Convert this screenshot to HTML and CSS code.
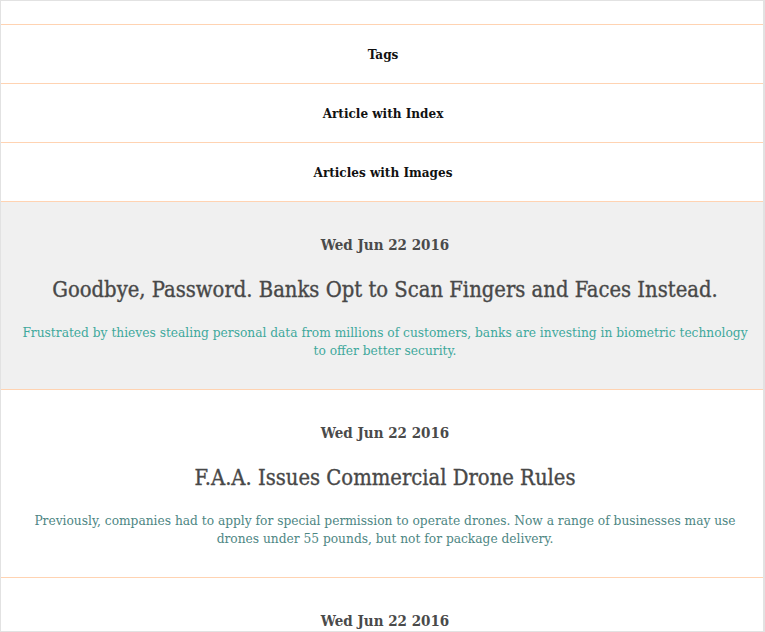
FILE: index.html
```html
<!DOCTYPE html>
<html>
<head>
<meta charset="utf-8">
<link rel="stylesheet" href="styles.css">
</head>
<body>
<div class="frame">
  <div class="top-row"></div>
  <nav class="nav">
    <a class="nav-item">Tags</a>
    <a class="nav-item">Article with Index</a>
    <a class="nav-item">Articles with Images</a>
  </nav>
  <div class="articles">
    <article class="article is-hover">
      <p class="date">Wed Jun 22 2016</p>
      <h2 class="title">Goodbye, Password. Banks Opt to Scan Fingers and Faces Instead.</h2>
      <p class="desc">Frustrated by thieves stealing personal data from millions of customers, banks are investing in biometric technology to offer better security.</p>
    </article>
    <article class="article">
      <p class="date">Wed Jun 22 2016</p>
      <h2 class="title">F.A.A. Issues Commercial Drone Rules</h2>
      <p class="desc">Previously, companies had to apply for special permission to operate drones. Now a range of businesses may use drones under 55 pounds, but not for package delivery.</p>
    </article>
    <article class="article">
      <p class="date">Wed Jun 22 2016</p>
      <h2 class="title">More Articles</h2>
    </article>
  </div>
</div>
</body>
</html>
```
FILE: styles.css
```css
html, body {
  margin: 0;
  padding: 0;
  background: #fff;
}
body {
  font-family: "DejaVu Serif Condensed", "DejaVu Serif", serif;
  font-stretch: condensed;
}
.frame {
  box-sizing: border-box;
  width: 765px;
  height: 632px;
  overflow: hidden;
  border: 1px solid #e2e2e2;
  border-right-width: 2px;
  display: flex;
  flex-direction: column;
}
.top-row {
  height: 23px;
  flex: none;
  border-bottom: 1px solid #ffd3b2;
}
.nav {
  display: flex;
  flex-direction: column;
  flex: none;
}
.nav-item {
  height: 58px;
  display: flex;
  align-items: center;
  justify-content: center;
  padding-left: 2px;
  border-bottom: 1px solid #ffd3b2;
  font-size: 13.4px;
  font-weight: bold;
  color: #111;
}
.article {
  flex: none;
  padding: 33px 14px 30px 20px;
  border-bottom: 1px solid #ffd3b2;
  text-align: center;
}
.article.is-hover {
  background: #f0f0f0;
}
.date {
  margin: 0;
  font-size: 15px;
  line-height: 20px;
  font-weight: bold;
  color: #4a4a4a;
}
.title {
  margin: 21px 0 0;
  font-size: 21.8px;
  line-height: 28px;
  font-weight: normal;
  color: #484848;
  -webkit-text-stroke: 0.35px #484848;
}
.desc {
  margin: 19px 0 0;
  font-size: 13.6px;
  line-height: 18px;
  color: #4d8683;
}
.is-hover .desc {
  color: #3ea89c;
}
```
